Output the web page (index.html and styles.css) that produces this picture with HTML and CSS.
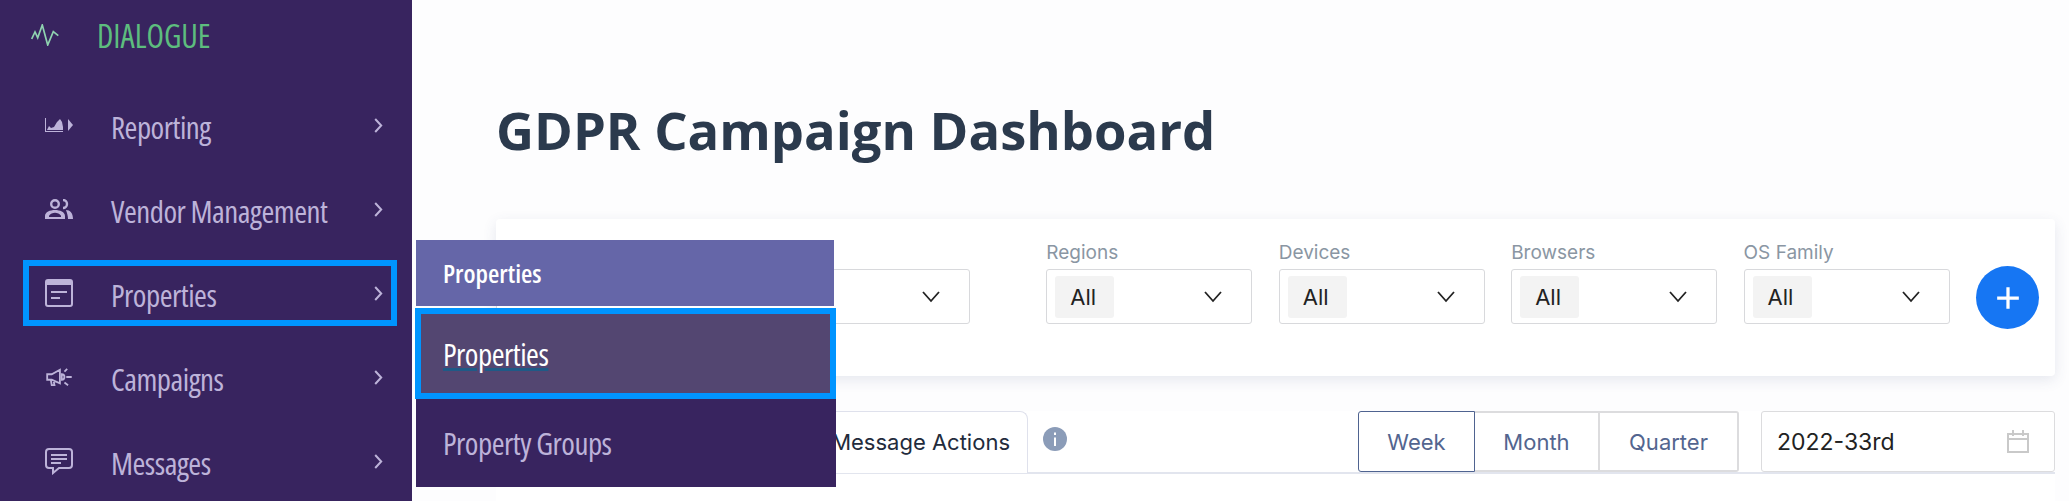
FILE: index.html
```html
<!DOCTYPE html>
<html lang="en">
<head>
    <meta charset="UTF-8">
    <title>GDPR Campaign Dashboard</title>
    <link rel="stylesheet" href="styles.css">
</head>
<body>

    <!-- Sidebar -->
    <nav class="sidebar">
        <div class="brand">
            <svg class="brand-icon" viewBox="0 0 28 22"><path d="M.7 15 4 8l2.7 5.7L11.3 1l5.4 20 5.6-13.3 5 4" fill="none" stroke="#8fd3b0" stroke-width="1.7"/></svg>
            <span>DIALOGUE</span>
        </div>
        <a class="nav-item">
            <svg class="nav-icon" viewBox="0 0 28 14"><path d="M0 0h1v13h17v1H0zM2 12l2-4 2 2 3-1 3-5 3-3 2 3 1 5v3z" fill="#bdb3d9"/><path d="M23 1l5 6-5 6z" fill="#bdb3d9"/></svg>
            <span class="nav-label">Reporting</span>
            <svg class="chevron" viewBox="0 0 9 15"><path d="M1.2 1l6 6.5-6 6.5" fill="none" stroke="#bdb3d9" stroke-width="2"/></svg>
        </a>
        <a class="nav-item">
            <svg class="nav-icon" viewBox="0 0 28 20"><g fill="none" stroke="#bdb3d9" stroke-width="2.4"><circle cx="10" cy="5" r="3.8"/><path d="M18 1a4 4 0 0 1 0 8"/></g><path d="M0 20v-3c0-4 5-6 10-6s10 2 10 6v3zM4 18h12v-1.2c-1-2-4-3-6-3s-5 1-6 3zM21 11c4 0 7 3 7 9h-5c0-3-1-6-2-9z" fill="#bdb3d9" fill-rule="evenodd"/></svg>
            <span class="nav-label">Vendor Management</span>
            <svg class="chevron" viewBox="0 0 9 15"><path d="M1.2 1l6 6.5-6 6.5" fill="none" stroke="#bdb3d9" stroke-width="2"/></svg>
        </a>
        <a class="nav-item focused">
            <svg class="nav-icon tall" viewBox="0 0 28 28"><rect x="1" y="1" width="26" height="26" rx="2" fill="none" stroke="#bdb3d9" stroke-width="2"/><path d="M1 1h26v5H1zM6 12h16v2H6zM6 18h9v2H6z" fill="#bdb3d9"/></svg>
            <span class="nav-label">Properties</span>
            <svg class="chevron" viewBox="0 0 9 15"><path d="M1.2 1l6 6.5-6 6.5" fill="none" stroke="#bdb3d9" stroke-width="2"/></svg>
        </a>
        <a class="nav-item">
            <svg class="nav-icon" viewBox="0 0 28 22"><path d="M1 8h5l9-5v15l-9-4H1zM5 14l1 6h3l-1-5" fill="none" stroke="#bdb3d9" stroke-width="2"/><path d="M17 8a3 3 0 0 1 0 6zM20 5l3-3M22 11h6M20 17l4 3" fill="none" stroke="#bdb3d9" stroke-width="2"/></svg>
            <span class="nav-label">Campaigns</span>
            <svg class="chevron" viewBox="0 0 9 15"><path d="M1.2 1l6 6.5-6 6.5" fill="none" stroke="#bdb3d9" stroke-width="2"/></svg>
        </a>
        <a class="nav-item">
            <svg class="nav-icon tall" viewBox="0 0 28 26"><path d="M4 1h20a3 3 0 0 1 3 3v13a3 3 0 0 1-3 3H14l-6 5v-5H4a3 3 0 0 1-3-3V4a3 3 0 0 1 3-3z" fill="none" stroke="#bdb3d9" stroke-width="2"/><path d="M6 6h16v2H6zM6 10h16v2H6zM6 14h10v2H6z" fill="#bdb3d9"/></svg>
            <span class="nav-label">Messages</span>
            <svg class="chevron" viewBox="0 0 9 15"><path d="M1.2 1l6 6.5-6 6.5" fill="none" stroke="#bdb3d9" stroke-width="2"/></svg>
        </a>
    </nav>

    <!-- Flyout menu -->
    <div class="flyout">
        <div class="flyout-head">Properties</div>
        <a class="flyout-item current">Properties</a>
        <a class="flyout-item">Property Groups</a>
    </div>

    <!-- Main -->
    <main class="content">
        <h1>GDPR Campaign Dashboard</h1>

        <section class="filters">
            <div class="filter first">
                <div class="select">
                    <svg class="caret" viewBox="0 0 18 12"><path d="M1 1l8 9 8-9" fill="none" stroke="#222" stroke-width="1.8"/></svg>
                </div>
            </div>
            <div class="filter">
                <label>Regions</label>
                <div class="select">
                    <span class="chip">All</span>
                    <svg class="caret" viewBox="0 0 18 12"><path d="M1 1l8 9 8-9" fill="none" stroke="#222" stroke-width="1.8"/></svg>
                </div>
            </div>
            <div class="filter">
                <label>Devices</label>
                <div class="select">
                    <span class="chip">All</span>
                    <svg class="caret" viewBox="0 0 18 12"><path d="M1 1l8 9 8-9" fill="none" stroke="#222" stroke-width="1.8"/></svg>
                </div>
            </div>
            <div class="filter">
                <label>Browsers</label>
                <div class="select">
                    <span class="chip">All</span>
                    <svg class="caret" viewBox="0 0 18 12"><path d="M1 1l8 9 8-9" fill="none" stroke="#222" stroke-width="1.8"/></svg>
                </div>
            </div>
            <div class="filter">
                <label>OS Family</label>
                <div class="select">
                    <span class="chip">All</span>
                    <svg class="caret" viewBox="0 0 18 12"><path d="M1 1l8 9 8-9" fill="none" stroke="#222" stroke-width="1.8"/></svg>
                </div>
            </div>
            <button class="add-button">
                <svg viewBox="0 0 24 24"><path d="M12 2v20M2 12h20" stroke="#fff" stroke-width="3"/></svg>
            </button>
        </section>

        <section class="report">
            <div class="report-bar">
                <div class="tab">Message Actions</div>
                <svg class="info" viewBox="0 0 24 24"><circle cx="12" cy="12" r="12" fill="#8b9cb8"/><path d="M11 10.5h2V19h-2zM11 5.5h2v2.4h-2z" fill="#fff"/></svg>
                <div class="periods">
                    <button class="period active">Week</button>
                    <button class="period month">Month</button>
                    <button class="period quarter">Quarter</button>
                </div>
                <div class="date-box">
                    <span>2022-33rd</span>
                    <svg class="calendar" viewBox="0 0 22 23"><path d="M1 4h20v18H1zM1 9h20M6 0v6M16 0v6" fill="none" stroke="#c9c9c9" stroke-width="2"/></svg>
                </div>
            </div>
        </section>
    </main>

</body>
</html>
```

FILE: styles.css
```css
/* body */
html, body {
    height: 501px;
    overflow: hidden;
}

body {
    margin: 0;
    display: flex;
    background-color: #fdfdfe;
    font-family: 'Inter', 'Liberation Sans', sans-serif;
}

/* Sidebar */
.sidebar {
    width: 412px;
    height: 501px;
    flex-shrink: 0;
    background-color: #38245f;
    box-sizing: border-box;
    padding: 0 15px 0 23px;
    font-family: 'Open Sans', sans-serif;
    font-stretch: 75%;
    overflow: hidden;
}

.brand {
    display: flex;
    align-items: center;
    height: 74px;
    padding-bottom: 4px;
    box-sizing: border-box;
    margin-left: 8px;
    color: #5dbd7e;
    font-size: 32px;
    font-weight: 500;
}

.brand-icon {
    width: 28px;
    height: 22px;
    margin-right: 38px;
}

.nav-item {
    display: flex;
    align-items: center;
    height: 66px;
    margin: 18px 0;
    padding: 0 8px 0 16px;
    box-sizing: border-box;
    border: 6px solid transparent;
    color: #bdb3d9;
    font-size: 31px;
    font-weight: 400;
    letter-spacing: -0.5px;
    white-space: nowrap;
}

.nav-item.focused {
    border-color: #0094ff;
}

.nav-icon {
    width: 28px;
    height: 20px;
    flex-shrink: 0;
}

.nav-icon.tall {
    height: 28px;
}

.nav-label {
    flex: 1;
    margin-left: 38px;
    padding-top: 4px;
}

.chevron {
    width: 9px;
    height: 15px;
}

/* Flyout */
.flyout {
    position: absolute;
    left: 415px;
    top: 240px;
    width: 421px;
    font-family: 'Open Sans', sans-serif;
    font-stretch: 75%;
}

.flyout-head {
    width: 418px;
    height: 66px;
    margin: 0 0 2px 1px;
    padding-left: 27px;
    box-sizing: border-box;
    background-color: #6566a8;
    color: #fff;
    font-size: 26px;
    font-weight: 600;
    line-height: 66px;
}

.flyout-item {
    display: block;
    height: 88px;
    margin-left: 1px;
    padding-left: 27px;
    box-sizing: border-box;
    background-color: #38245f;
    color: #bdb3d9;
    font-size: 31px;
    font-weight: 400;
    letter-spacing: -0.5px;
    line-height: 88px;
}

.flyout-item.current {
    height: 91px;
    margin-left: 0;
    padding-left: 22px;
    border: 6px solid #0094ff;
    background-color: #534671;
    color: #fff;
    line-height: 81px;
    text-decoration: underline;
    text-decoration-color: #1f5a86;
}

/* Main */
.content {
    flex: 1;
    padding: 0 14px 0 84px;
    min-width: 0;
}

h1 {
    margin: 0;
    height: 219px;
    padding-top: 94px;
    box-sizing: border-box;
    color: #2b3a4d;
    font-family: 'Open Sans', sans-serif;
    font-size: 52.5px;
    font-weight: 700;
    line-height: 72px;
}

/* Filters */
.filters {
    display: flex;
    align-items: flex-start;
    gap: 26.5px;
    height: 157px;
    padding: 0 16px 0 0;
    box-sizing: border-box;
    background-color: white;
    border-radius: 4px;
    box-shadow: 0 4px 14px rgba(60, 70, 120, 0.12);
}

.filter {
    width: 206px;
    padding-top: 24px;
}

.filter.first {
    width: 474px;
    margin-right: 50px;
    padding-top: 50px;
}

.filter label {
    display: block;
    height: 26px;
    color: #8a96a3;
    font-size: 19px;
    line-height: 20px;
}

.select {
    display: flex;
    align-items: center;
    justify-content: space-between;
    height: 55px;
    padding: 0 29px 0 8px;
    box-sizing: border-box;
    border: 1px solid #d8d9dc;
    border-radius: 3px;
}

.filter.first .select {
    justify-content: flex-end;
}

.chip {
    width: 59px;
    height: 42px;
    padding-left: 15px;
    box-sizing: border-box;
    background-color: #f3f3f3;
    border-radius: 3px;
    color: #222;
    font-size: 22px;
    line-height: 42px;
}

.caret {
    width: 18px;
    height: 12px;
}

.add-button {
    width: 63px;
    height: 63px;
    margin-top: 47px;
    flex-shrink: 0;
    padding: 0;
    border: none;
    border-radius: 50%;
    background-color: #1676f3;
}

.add-button svg {
    width: 26px;
    height: 26px;
    vertical-align: middle;
}

/* Report */
.report {
    margin-top: 35px;
    height: 90px;
    background-color: white;
}

.report-bar {
    display: flex;
    align-items: flex-start;
    height: 63px;
    border-bottom: 2px solid #e2e5ee;
    box-sizing: border-box;
}

.tab {
    width: 532px;
    height: 62px;
    padding-right: 17px;
    box-sizing: border-box;
    border: 1px solid #dfe1ec;
    border-bottom: none;
    border-radius: 8px 8px 0 0;
    background-color: white;
    color: #222b3c;
    font-size: 22px;
    line-height: 60px;
    text-align: right;
}

.info {
    width: 24px;
    height: 24px;
    margin: 16px 0 0 15px;
}

.periods {
    display: flex;
    margin-left: 291px;
}

.period {
    height: 61px;
    padding: 0;
    border: 2px solid #dcdcde;
    border-left: none;
    background-color: white;
    color: #53658f;
    font-family: 'Inter', 'Liberation Sans', sans-serif;
    font-size: 22px;
}

.period.active {
    width: 117px;
    border: 1px solid #4f6390;
    border-radius: 3px 0 0 3px;
}

.period.month {
    width: 125px;
}

.period.quarter {
    width: 139px;
    border-radius: 0 3px 3px 0;
}

.date-box {
    display: flex;
    align-items: center;
    justify-content: space-between;
    width: 294px;
    height: 61px;
    margin-left: 22px;
    padding: 0 25px 0 15px;
    box-sizing: border-box;
    border: 1px solid #dcdcde;
    border-radius: 3px;
    color: #222;
    font-size: 23px;
}

.calendar {
    width: 22px;
    height: 23px;
}
```
